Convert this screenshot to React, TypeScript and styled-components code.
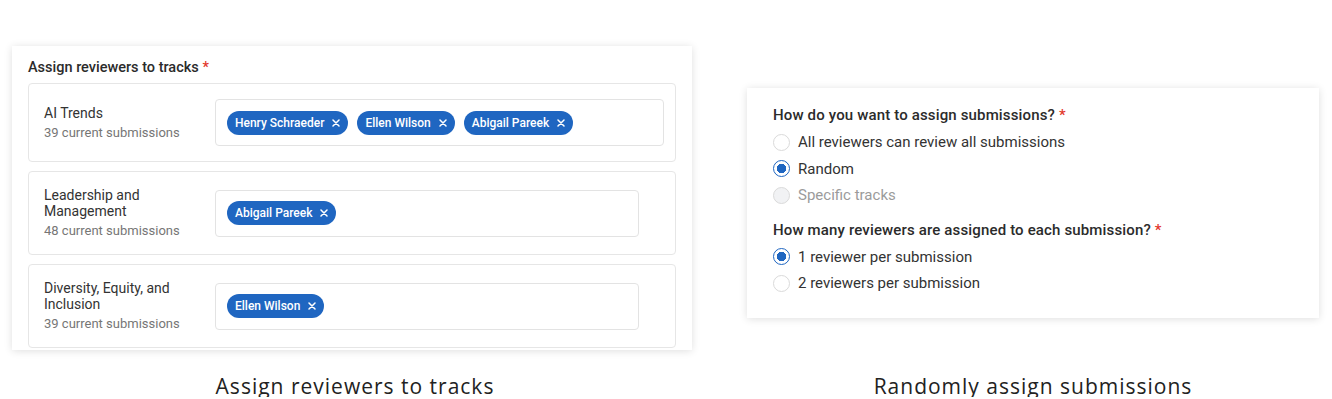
import React from "react";
import styled, { createGlobalStyle } from "styled-components";

const BLUE = "#1f66c1";

const GlobalStyle = createGlobalStyle`
  html, body {
    margin: 0;
    padding: 0;
    background: #ffffff;
  }
  body {
    font-family: Roboto, "Liberation Sans", Arial, sans-serif;
    color: #2b2b2b;
  }
`;

interface Track {
  name: string;
  submissions: number;
  reviewers: string[];
  wide?: boolean;
}

const tracks: Track[] = [
  {
    name: "AI Trends",
    submissions: 39,
    reviewers: ["Henry Schraeder", "Ellen Wilson", "Abigail Pareek"],
    wide: true,
  },
  { name: "Leadership and Management", submissions: 48, reviewers: ["Abigail Pareek"] },
  { name: "Diversity, Equity, and Inclusion", submissions: 39, reviewers: ["Ellen Wilson"] },
];

type RadioState = "on" | "off" | "disabled";

const assignOptions: { label: string; state: RadioState }[] = [
  { label: "All reviewers can review all submissions", state: "off" },
  { label: "Random", state: "on" },
  { label: "Specific tracks", state: "disabled" },
];

const countOptions: { label: string; state: RadioState }[] = [
  { label: "1 reviewer per submission", state: "on" },
  { label: "2 reviewers per submission", state: "off" },
];

const CloseIcon = () => (
  <svg width="8" height="8" viewBox="0 0 8 8" aria-hidden>
    <path d="M1 1 L7 7 M7 1 L1 7" stroke="#fff" strokeWidth="1.5" strokeLinecap="round" />
  </svg>
);

const App = () => (
  <>
    <GlobalStyle />
    <Page>
      <Figure>
        <TracksCard>
          <CardTitle>
            Assign reviewers to tracks <Required>*</Required>
          </CardTitle>
          <TrackList>
            {tracks.map((t) => (
              <TrackRow key={t.name}>
                <TrackInfo>
                  <TrackName>{t.name}</TrackName>
                  <TrackCount>{t.submissions} current submissions</TrackCount>
                </TrackInfo>
                <ChipInput $wide={t.wide}>
                  {t.reviewers.map((r) => (
                    <Chip key={r}>
                      {r}
                      <CloseIcon />
                    </Chip>
                  ))}
                </ChipInput>
              </TrackRow>
            ))}
          </TrackList>
        </TracksCard>
        <Caption $offset={6}>Assign reviewers to tracks</Caption>
      </Figure>

      <Figure>
        <RandomCard>
          <Question>
            How do you want to assign submissions? <Required>*</Required>
          </Question>
          <RadioGroup>
            {assignOptions.map((o) => (
              <RadioRow key={o.label} $state={o.state}>
                <RadioCircle $state={o.state} />
                {o.label}
              </RadioRow>
            ))}
          </RadioGroup>
          <Question $spaced>
            How many reviewers are assigned to each submission? <Required>*</Required>
          </Question>
          <RadioGroup>
            {countOptions.map((o) => (
              <RadioRow key={o.label} $state={o.state}>
                <RadioCircle $state={o.state} />
                {o.label}
              </RadioRow>
            ))}
          </RadioGroup>
        </RandomCard>
        <Caption>Randomly assign submissions</Caption>
      </Figure>
    </Page>
  </>
);

const Page = styled.div`
  display: grid;
  grid-template-columns: 680px 572px;
  column-gap: 55px;
  padding: 46px 0 0 12px;
`;

const Figure = styled.div`
  display: grid;
  grid-template-rows: 304px auto;
  row-gap: 25px;
`;

const Card = styled.div`
  background: #fff;
  box-shadow: 0 1px 8px rgba(0, 0, 0, 0.13);
  box-sizing: border-box;
`;

const TracksCard = styled(Card)`
  padding: 13px 16px 3px;
  overflow: hidden;
`;

const CardTitle = styled.div`
  font-size: 14.5px;
  line-height: 18px;
  font-weight: 500;
  color: #2b2b2b;
  margin-bottom: 6px;
`;

const Required = styled.span`
  color: #e2372c;
`;

const TrackList = styled.div`
  display: flex;
  flex-direction: column;
  gap: 9px;
`;

const TrackRow = styled.div`
  display: flex;
  align-items: center;
  border: 1px solid #e6e6e6;
  border-radius: 4px;
  padding: 15px 11px 15px 15px;
`;

const TrackInfo = styled.div`
  width: 171px;
  flex-shrink: 0;
  display: flex;
  flex-direction: column;
  gap: 4px;
`;

const TrackName = styled.div`
  font-size: 14px;
  line-height: 16px;
  color: #333;
  padding-right: 20px;
`;

const TrackCount = styled.div`
  font-size: 13px;
  line-height: 16px;
  color: #767676;
`;

const ChipInput = styled.div<{ $wide?: boolean }>`
  width: ${(p) => (p.$wide ? 449 : 424)}px;
  height: 47px;
  box-sizing: border-box;
  border: 1px solid #e3e3e3;
  border-radius: 4px;
  display: flex;
  align-items: center;
  gap: 9px;
  padding: 0 11px;
`;

const Chip = styled.span`
  display: inline-flex;
  align-items: center;
  gap: 8px;
  height: 24px;
  padding: 0 8px;
  border-radius: 12px;
  background: ${BLUE};
  color: #fff;
  font-size: 12px;
  font-weight: 500;
  white-space: nowrap;
`;

const RandomCard = styled(Card)`
  margin-top: 42px;
  height: 230px;
  padding: 17px 26px 0;
`;

const Question = styled.div<{ $spaced?: boolean }>`
  font-size: 15px;
  line-height: 20px;
  font-weight: 500;
  color: #2b2b2b;
  letter-spacing: 0.15px;
  margin-top: ${(p) => (p.$spaced ? "11px" : "0")};
`;

const RadioGroup = styled.div`
  display: flex;
  flex-direction: column;
  margin-top: 4px;
`;

const RadioRow = styled.div<{ $state: RadioState }>`
  display: flex;
  align-items: center;
  gap: 8px;
  height: 26.5px;
  font-size: 15px;
  color: ${(p) => (p.$state === "disabled" ? "#9b9b9b" : "#333")};
`;

const RadioCircle = styled.span<{ $state: RadioState }>`
  width: 17px;
  height: 17px;
  box-sizing: border-box;
  border-radius: 50%;
  flex-shrink: 0;
  border: ${(p) => (p.$state === "on" ? `1.5px solid ${BLUE}` : "1px solid #dadada")};
  background: ${(p) =>
    p.$state === "on"
      ? `radial-gradient(circle, ${BLUE} 0 4.5px, #fff 5px)`
      : p.$state === "disabled"
      ? "#f1f2f4"
      : "#fff"};
`;

const Caption = styled.div<{ $offset?: number }>`
  font-family: "Open Sans", Lato, sans-serif;
  font-size: 21px;
  line-height: 22px;
  letter-spacing: 1px;
  color: #222;
  text-align: center;
  padding-left: ${(p) => p.$offset ?? 0}px;
`;

export default App;
